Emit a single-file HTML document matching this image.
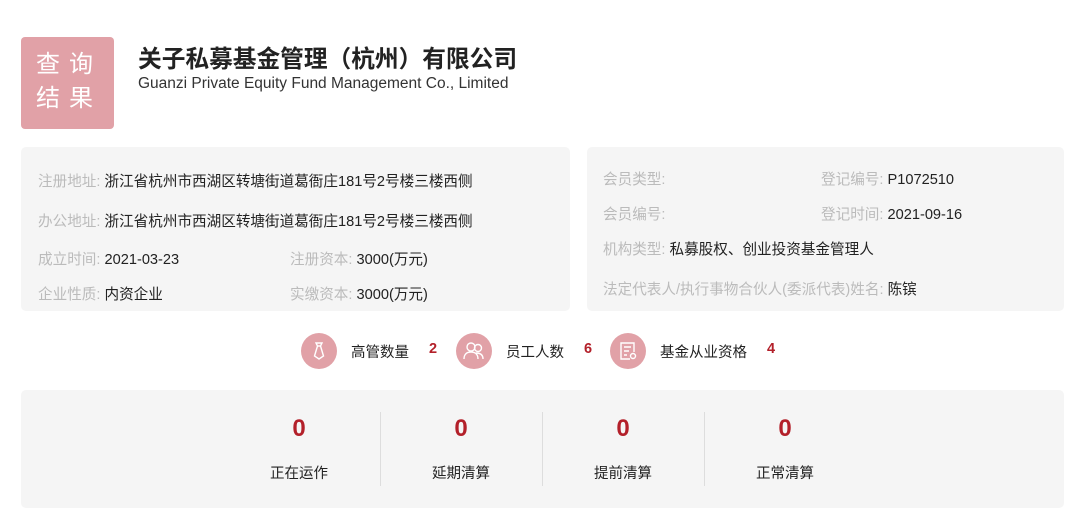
<!DOCTYPE html>
<html><head><meta charset="utf-8"><style>
*{margin:0;padding:0;box-sizing:border-box}
body{width:1080px;height:521px;background:#fff;font-family:"Liberation Sans","Noto Sans CJK SC",sans-serif;position:relative;overflow:hidden;color:#222}
.abs{position:absolute;white-space:nowrap}
.badge{left:21px;top:37px;width:93px;height:92px;background:#e1a1a7;border-radius:4px;color:#fff;font-size:24px;letter-spacing:9px;line-height:34px;padding:11px 0 0 15px}
.title{left:138px;top:40px;font-size:23.7px;font-weight:bold;color:#222}
.sub{left:138px;top:75px;font-size:15.5px;color:#333}
.box{background:#f5f5f5;border-radius:5px;position:absolute}
.t{position:absolute;font-size:14.6px;white-space:nowrap;color:#222}
.t b{font-weight:normal;color:#bbb}
.ic{position:absolute;width:36px;height:36px;border-radius:50%;background:#e1a1a7;top:333px}
.lab{position:absolute;top:341px;font-size:14.5px}
.num{position:absolute;top:341px;font-size:14.5px;font-weight:bold;color:#b3202a}
.big{position:absolute;top:415px;font-size:24px;font-weight:bold;color:#b3202a;width:60px;text-align:center}
.sl{position:absolute;top:462px;font-size:14.5px;width:100px;text-align:center}
.dv{position:absolute;top:412px;width:1px;height:74px;background:#ddd}
</style></head><body>
<div class="abs badge">查询<br>结果</div>
<div class="abs title">关子私募基金管理（杭州）有限公司</div>
<div class="abs sub">Guanzi Private Equity Fund Management Co., Limited</div>

<div class="box" style="left:21px;top:147px;width:549px;height:164px"></div>
<div class="t" style="left:38px;top:170px"><b>注册地址:</b> 浙江省杭州市西湖区转塘街道葛衙庄181号2号楼三楼西侧</div>
<div class="t" style="left:38px;top:210px"><b>办公地址:</b> 浙江省杭州市西湖区转塘街道葛衙庄181号2号楼三楼西侧</div>
<div class="t" style="left:38px;top:248px"><b>成立时间:</b> 2021-03-23</div>
<div class="t" style="left:290px;top:248px"><b>注册资本:</b> 3000(万元)</div>
<div class="t" style="left:38px;top:283px"><b>企业性质:</b> 内资企业</div>
<div class="t" style="left:290px;top:283px"><b>实缴资本:</b> 3000(万元)</div>

<div class="box" style="left:587px;top:147px;width:477px;height:164px"></div>
<div class="t" style="left:603px;top:168px"><b>会员类型:</b></div>
<div class="t" style="left:821px;top:168px"><b>登记编号:</b> P1072510</div>
<div class="t" style="left:603px;top:203px"><b>会员编号:</b></div>
<div class="t" style="left:821px;top:203px"><b>登记时间:</b> 2021-09-16</div>
<div class="t" style="left:603px;top:238px"><b>机构类型:</b> 私募股权、创业投资基金管理人</div>
<div class="t" style="left:603px;top:278px"><b>法定代表人/执行事物合伙人(委派代表)姓名:</b> 陈镔</div>

<div class="ic" style="left:301px"><svg width="36" height="36" viewBox="0 0 36 36" fill="none" stroke="#fff" stroke-width="1.4"><path d="M15 10h6l-1.5 3h-3z M16.5 13l-3 10 4.5 3 4.5-3-3-10"/></svg></div>
<div class="lab" style="left:351px">高管数量</div><div class="num" style="left:429px">2</div>
<div class="ic" style="left:456px"><svg width="36" height="36" viewBox="0 0 36 36" fill="none" stroke="#fff" stroke-width="1.4"><circle cx="15" cy="14" r="4"/><circle cx="22" cy="15" r="3.5"/><path d="M8 26c0-5 3-7 7-7s7 2 7 7 M20 20c3 0 7 1 7 6"/></svg></div>
<div class="lab" style="left:506px">员工人数</div><div class="num" style="left:584px">6</div>
<div class="ic" style="left:610px"><svg width="36" height="36" viewBox="0 0 36 36" fill="none" stroke="#fff" stroke-width="1.4"><path d="M20 26h-9V10h13v9 M14 14h7 M14 18h5 M14 22h3"/><circle cx="23" cy="23" r="2.5"/></svg></div>
<div class="lab" style="left:660px">基金从业资格</div><div class="num" style="left:767px">4</div>

<div class="box" style="left:21px;top:390px;width:1043px;height:118px"></div>
<div class="big" style="left:269px">0</div><div class="sl" style="left:249px">正在运作</div>
<div class="dv" style="left:380px"></div>
<div class="big" style="left:431px">0</div><div class="sl" style="left:411px">延期清算</div>
<div class="dv" style="left:542px"></div>
<div class="big" style="left:593px">0</div><div class="sl" style="left:573px">提前清算</div>
<div class="dv" style="left:704px"></div>
<div class="big" style="left:755px">0</div><div class="sl" style="left:735px">正常清算</div>
</body></html>
